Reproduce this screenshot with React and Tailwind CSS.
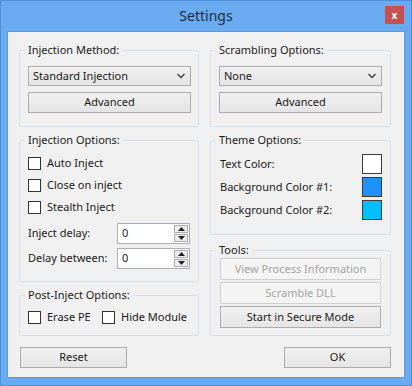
import React from 'react';

const font = { fontFamily: '"Noto Sans", "Open Sans", sans-serif' };

function Group({ label, className = '', bodyClass = '', children }) {
  return (
    <fieldset className={`border border-[#d5dfe5] rounded-[2px] ${className}`}>
      <legend className="ml-[5px] px-[3px] text-[11px] leading-[16px] text-[#1a1a1a] whitespace-nowrap">{label}</legend>
      <div className={bodyClass}>{children}</div>
    </fieldset>
  );
}

function Button({ children, disabled, className = '' }) {
  return (
    <button
      type="button"
      disabled={disabled}
      className={`flex items-center justify-center text-[11px] border whitespace-nowrap ${
        disabled
          ? 'border-[#d0d0d0] bg-[#f4f4f4] text-[#a3a3a3]'
          : 'border-[#acacac] bg-gradient-to-b from-[#f0f0f0] to-[#e5e5e5] text-[#1a1a1a]'
      } ${className}`}
    >
      {children}
    </button>
  );
}

function Combo({ value }) {
  return (
    <div className="flex items-center justify-between h-[20px] border border-[#acacac] bg-gradient-to-b from-[#f0f0f0] to-[#e5e5e5] pl-[4px] pr-[5px] text-[11px] text-[#1a1a1a]">
      <span>{value}</span>
      <svg width="8" height="6" viewBox="0 0 8 6">
        <path d="M0.5 1 L4 4.5 L7.5 1" fill="none" stroke="#444" strokeWidth="1.5" />
      </svg>
    </div>
  );
}

function Check({ label, className = '' }) {
  return (
    <label className={`flex items-center h-[22px] text-[11px] text-[#1a1a1a] whitespace-nowrap ${className}`}>
      <span className="shrink-0 w-[13px] h-[13px] border border-[#333] bg-white mr-[6px]" />
      {label}
    </label>
  );
}

function Spin({ label }) {
  return (
    <div className="flex items-center h-[21px] text-[11px] text-[#1a1a1a] whitespace-nowrap">
      <span className="w-[89px]">{label}</span>
      <div className="flex items-center w-[73px] h-[21px] border border-[#abadb3] bg-white pl-[4px] pr-[1px]">
        <span className="flex-1">0</span>
        <div className="flex flex-col gap-[1px]">
          <div className="flex items-center justify-center w-[14px] h-[8px] border border-[#acacac] bg-[#ececec]">
            <svg width="7" height="4" viewBox="0 0 7 4"><path d="M0 4 L3.5 0 L7 4 Z" fill="#222" /></svg>
          </div>
          <div className="flex items-center justify-center w-[14px] h-[8px] border border-[#acacac] bg-[#ececec]">
            <svg width="7" height="4" viewBox="0 0 7 4"><path d="M0 0 L3.5 4 L7 0 Z" fill="#222" /></svg>
          </div>
        </div>
      </div>
    </div>
  );
}

function Swatch({ label, color }) {
  return (
    <div className="flex items-center justify-between h-[20px] text-[11px] text-[#1a1a1a] whitespace-nowrap">
      <span>{label}</span>
      <span className={`w-[20px] h-[20px] border border-[#3a3a3a] ${color}`} />
    </div>
  );
}

export default function App() {
  return (
    <div style={font} className="w-[412px] h-[386px] bg-[#6aaaf0] border border-[#4f8ddb] flex flex-col">
      {/* title bar */}
      <div className="relative h-[30px] flex items-center justify-center">
        <span className="text-[14px] text-[#1e2d45] -mt-[1px]">Settings</span>
        <div className="absolute right-[7px] top-[5px] w-[19px] h-[18px] bg-[#c75050] flex items-center justify-center">
          <span className="text-white text-[10px] font-bold leading-none">x</span>
        </div>
      </div>

      {/* client area */}
      <div className="mx-[6px] mb-[7px] flex-1 border border-[#5d97e0] bg-[#f0f0f0] flex flex-col px-[11px] pt-[10px]">
        <div className="flex gap-[11px]">
          {/* left column */}
          <div className="w-[180px] flex flex-col">
            <Group label="Injection Method:" className="h-[85px]" bodyClass="pl-[8px] pr-[7px]">
              <div className="mt-[8px]">
                <Combo value="Standard Injection" />
              </div>
              <Button className="mt-[6px] w-full h-[21px]">Advanced</Button>
            </Group>

            <Group label="Injection Options:" className="mt-[5px] h-[150px]" bodyClass="pl-[8px] pr-[7px]">
              <div className="mt-[4px]">
                <Check label="Auto Inject" />
                <Check label="Close on inject" />
                <Check label="Stealth Inject" />
              </div>
              <div className="mt-[5px] flex flex-col gap-[4px]">
                <Spin label="Inject delay:" />
                <Spin label="Delay between:" />
              </div>
            </Group>

            <Group label="Post-Inject Options:" className="mt-[5px] h-[49px]" bodyClass="pl-[8px] pr-[7px]">
              <div className="mt-[3px] flex">
                <Check label="Erase PE" className="w-[74px]" />
                <Check label="Hide Module" />
              </div>
            </Group>
          </div>

          {/* right column */}
          <div className="w-[181px] flex flex-col">
            <Group label="Scrambling Options:" className="h-[85px]" bodyClass="pl-[8px] pr-[8px]">
              <div className="mt-[8px]">
                <Combo value="None" />
              </div>
              <Button className="mt-[6px] w-full h-[21px]">Advanced</Button>
            </Group>

            <Group label="Theme Options:" className="mt-[5px] h-[103px]" bodyClass="pl-[9px] pr-[8px]">
              <div className="mt-[6px] flex flex-col gap-[3px]">
                <Swatch label="Text Color:" color="bg-white" />
                <Swatch label="Background Color #1:" color="bg-[#1e90ff]" />
                <Swatch label="Background Color #2:" color="bg-[#00bfff]" />
              </div>
            </Group>

            <Group label="Tools:" className="mt-[7px] h-[94px]" bodyClass="pl-[9px] pr-[9px]">
              <div className="flex flex-col gap-[2px]">
                <Button disabled className="w-full h-[22px]">View Process Information</Button>
                <Button disabled className="w-full h-[22px]">Scramble DLL</Button>
                <Button className="w-full h-[22px]">Start in Secure Mode</Button>
              </div>
            </Group>
          </div>
        </div>

        {/* bottom buttons */}
        <div className="mt-[11px] flex justify-between pl-[1px] pr-[2px]">
          <Button className="w-[107px] h-[21px]">Reset</Button>
          <Button className="w-[107px] h-[21px]">OK</Button>
        </div>
      </div>
    </div>
  );
}
